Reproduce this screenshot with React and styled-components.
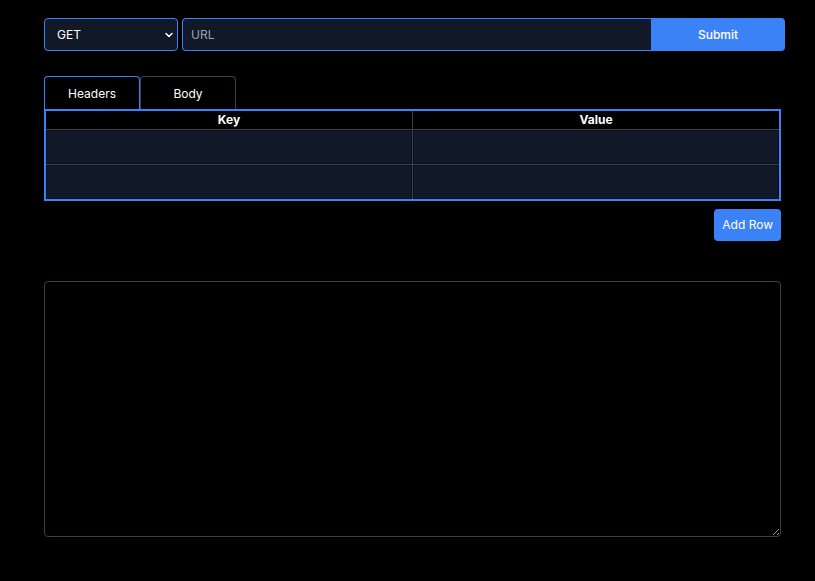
import React, { useState } from 'react'
import styled, { createGlobalStyle } from 'styled-components'
import { ChevronDown } from 'lucide-react'

const GlobalStyle = createGlobalStyle`
  html, body {
    margin: 0;
    background: #000;
    color: #fff;
    font-family: Inter, "Noto Sans", sans-serif;
  }
  * {
    box-sizing: border-box;
  }
`

const Page = styled.div`
  padding: 18px 0 0 44px;
  width: 785px;
`

const RequestBar = styled.form`
  display: flex;
  align-items: stretch;
  height: 33px;
`

const SelectWrap = styled.div`
  position: relative;
  width: 134px;
  margin-right: 4px;

  svg {
    position: absolute;
    right: 3px;
    top: 11px;
    pointer-events: none;
  }
`

const MethodSelect = styled.select`
  appearance: none;
  width: 100%;
  height: 100%;
  background: #111827;
  color: #fff;
  border: 1px solid #3b82f6;
  border-radius: 4px;
  padding: 0 12px;
  font: 12px Inter, sans-serif;
  outline: none;
`

const UrlInput = styled.input`
  flex: 1;
  height: 100%;
  background: #111827;
  color: #fff;
  border: 1px solid #3b82f6;
  border-right: none;
  border-radius: 4px 0 0 4px;
  padding: 0 8px;
  font: 12px Inter, sans-serif;
  outline: none;

  &::placeholder {
    color: #9ca3af;
  }
`

const SubmitButton = styled.button`
  width: 134px;
  border: none;
  background: #3b82f6;
  color: #fff;
  border-radius: 0 4px 4px 0;
  font: 500 12px Inter, sans-serif;
  cursor: pointer;
`

const Tabs = styled.div`
  display: flex;
  margin-top: 25px;
`

const Tab = styled.button`
  width: 96px;
  height: 33px;
  background: #000;
  color: #fff;
  border: 1px solid ${(p) => (p.active ? '#3b82f6' : '#374151')};
  border-bottom: none;
  border-radius: 4px 4px 0 0;
  font: 12px Inter, sans-serif;
  cursor: pointer;
`

const Panel = styled.div`
  width: 737px;
`

const HeaderTable = styled.table`
  width: 100%;
  border: 2px solid #3b82f6;
  border-collapse: collapse;
  table-layout: fixed;

  th {
    height: 19px;
    padding: 0;
    font: bold 12px Inter, sans-serif;
    color: #fff;
    border: 1px solid #374151;
    border-top: none;
  }

  td {
    padding: 0;
    border: 1px solid #374151;
  }
`

const CellInput = styled.input`
  display: block;
  width: 100%;
  height: 34px;
  background: #111827;
  color: #fff;
  border: 1px solid #0b0f19;
  padding: 0 8px;
  font: 12px Inter, sans-serif;
  outline: none;
`

const Actions = styled.div`
  display: flex;
  justify-content: flex-end;
  margin-top: 8px;
`

const AddButton = styled.button`
  height: 32px;
  padding: 0 8px;
  border: none;
  border-radius: 4px;
  background: #3b82f6;
  color: #fff;
  font: 12px Inter, sans-serif;
  cursor: pointer;
`

const ResponseArea = styled.textarea`
  display: block;
  width: 737px;
  height: 256px;
  margin-top: 40px;
  background: #000;
  color: #fff;
  border: 1px solid #374151;
  border-radius: 4px;
  font: 12px "Liberation Mono", monospace;
  outline: none;
`

export default function App() {
  const [tab, setTab] = useState('headers')
  const [rows, setRows] = useState([
    { key: '', value: '' },
    { key: '', value: '' },
  ])

  return (
    <Page>
      <GlobalStyle />
      <RequestBar onSubmit={(e) => e.preventDefault()}>
        <SelectWrap>
          <MethodSelect defaultValue="GET">
            <option>GET</option>
            <option>POST</option>
            <option>PUT</option>
            <option>DELETE</option>
          </MethodSelect>
          <ChevronDown size={12} strokeWidth={3} color="#fff" />
        </SelectWrap>
        <UrlInput placeholder="URL" />
        <SubmitButton type="submit">Submit</SubmitButton>
      </RequestBar>

      <Tabs>
        <Tab active={tab === 'headers'} onClick={() => setTab('headers')}>
          Headers
        </Tab>
        <Tab active={tab === 'body'} onClick={() => setTab('body')}>
          Body
        </Tab>
      </Tabs>

      <Panel>
        <HeaderTable>
          <thead>
            <tr>
              <th>Key</th>
              <th>Value</th>
            </tr>
          </thead>
          <tbody>
            {rows.map((row, i) => (
              <tr key={i}>
                <td>
                  <CellInput defaultValue={row.key} />
                </td>
                <td>
                  <CellInput defaultValue={row.value} />
                </td>
              </tr>
            ))}
          </tbody>
        </HeaderTable>
        <Actions>
          <AddButton
            onClick={() => setRows((r) => [...r, { key: '', value: '' }])}>
            Add Row
          </AddButton>
        </Actions>
        <ResponseArea />
      </Panel>
    </Page>
  )
}
